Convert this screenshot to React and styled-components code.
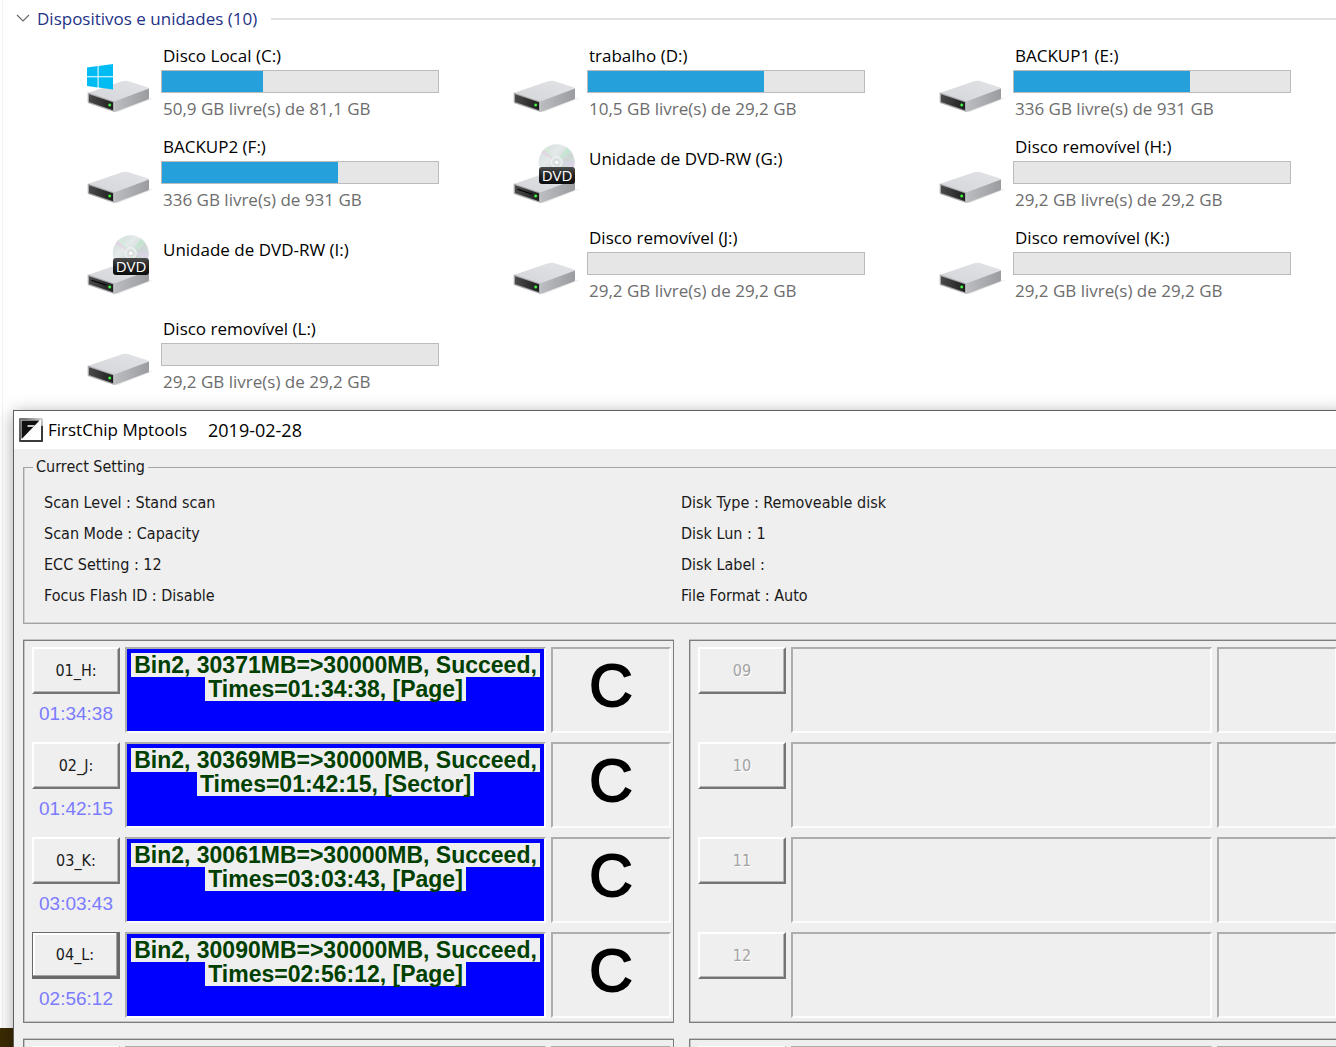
import styled, { createGlobalStyle, css } from 'styled-components';

const GlobalStyle = createGlobalStyle`
  * {
    box-sizing: border-box;
  }

  body {
    margin: 0;
  }

  button {
    font: inherit;
  }
`;

const segoe = '"Open Sans", "Noto Sans", sans-serif';
const tahoma = '"DejaVu Sans Condensed", "DejaVu Sans", sans-serif';
const arial = '"Liberation Sans", Arial, sans-serif';

const Desktop = styled.div`
  position: relative;
  height: 100vh;
  overflow: hidden;
  background: #3b2b04;
`;

/* ---------- Explorer ---------- */

const Explorer = styled.main`
  height: calc(100vh - 19px);
  margin-left: 2px;
  padding-top: 7px;
  border-left: 1px solid #f2f2f2;
  background: #fff;
  box-shadow: -2px 0 0 #fff;
  font-family: ${segoe};
  font-size: 17px;
  line-height: 24px;
  color: #000;
`;

const GroupHeader = styled.header`
  display: flex;
  align-items: center;
  padding-left: 13px;
`;

const GroupToggle = styled.button`
  display: flex;
  align-items: center;
  gap: 7px;
  padding: 0;
  border: 0;
  background: none;
  color: #1e3287;
`;

const GroupLine = styled.span`
  flex: 1;
  height: 2px;
  margin-left: 14px;
  background: #e2e2e2;
`;

const DriveGrid = styled.ul`
  display: grid;
  grid-template-columns: repeat(auto-fill, 352px);
  gap: 14px 74px;
  margin: 0;
  padding: 13px 0 0 84px;
  list-style: none;
`;

const DriveItem = styled.li`
  display: grid;
  grid-template-columns: 74px 1fr;
  height: 77px;
`;

const DriveInfo = styled.div`
  padding-top: ${({ $short }) => ($short ? '12px' : '0')};
`;

const DriveName = styled.div`
  padding-left: 2px;
`;

const DriveSpace = styled.div`
  padding-left: 2px;
  color: #6d6d6d;
`;

const UsageBar = styled.div`
  height: 23px;
  margin: 2px 0 4px;
  border: 1px solid #bcbcbc;
  background: #e6e6e6;
`;

const UsageFill = styled.div`
  height: 100%;
  background: #26a0da;
`;

const drives = [
  { name: 'Disco Local (C:)', space: '50,9 GB livre(s) de 81,1 GB', used: 36.6, windows: true },
  { name: 'trabalho (D:)', space: '10,5 GB livre(s) de 29,2 GB', used: 63.8 },
  { name: 'BACKUP1 (E:)', space: '336 GB livre(s) de 931 GB', used: 63.8 },
  { name: 'BACKUP2 (F:)', space: '336 GB livre(s) de 931 GB', used: 63.8 },
  { name: 'Unidade de DVD-RW (G:)', dvd: true },
  { name: 'Disco removível (H:)', space: '29,2 GB livre(s) de 29,2 GB', used: 0 },
  { name: 'Unidade de DVD-RW (I:)', dvd: true },
  { name: 'Disco removível (J:)', space: '29,2 GB livre(s) de 29,2 GB', used: 0 },
  { name: 'Disco removível (K:)', space: '29,2 GB livre(s) de 29,2 GB', used: 0 },
  { name: 'Disco removível (L:)', space: '29,2 GB livre(s) de 29,2 GB', used: 0 },
];

const DriveIcon = ({ windows, dvd }) => (
  <svg width="68" height="77" viewBox="0 0 68 77" aria-hidden="true">
    <defs>
      <linearGradient id="driveSide" x1="0" y1="0" x2="1" y2="0">
        <stop offset="0" stopColor="#bcbdc0" />
        <stop offset="1" stopColor="#9b9ca0" />
      </linearGradient>
      <linearGradient id="driveTop" x1="0" y1="1" x2="1" y2="0">
        <stop offset="0" stopColor="#d4d5d8" />
        <stop offset="1" stopColor="#e2e3e6" />
      </linearGradient>
      <linearGradient id="driveFront" x1="0" y1="0" x2="1" y2="0">
        <stop offset="0" stopColor="#4a4a4a" />
        <stop offset="1" stopColor="#1f1f1f" />
      </linearGradient>
      <linearGradient id="disc" x1="0" y1="0" x2="1" y2="1">
        <stop offset="0" stopColor="#cfd8d8" />
        <stop offset="0.35" stopColor="#e4eaea" />
        <stop offset="0.6" stopColor="#cdd6d4" />
        <stop offset="1" stopColor="#e3e3ea" />
      </linearGradient>
      <linearGradient id="dvdLabel" x1="0" y1="0" x2="0" y2="1">
        <stop offset="0" stopColor="#4c4c4c" />
        <stop offset="0.5" stopColor="#222" />
        <stop offset="1" stopColor="#0c0c0c" />
      </linearGradient>
    </defs>
    <path d="M27 68 62 54.5 67 54 31 68Z" fill="#e9e9e9" />
    <path d="M0.7 49 35 37.3Q38 36.4 41 37.1L60.5 43.2Q62.2 44 62 45L27.3 58.6Z" fill="url(#driveTop)" />
    <path d="M27.3 57.6 62 44.6V54Q62 55 60.8 55.5L29 67.6Q28 68 27.3 67.9Z" fill="url(#driveSide)" />
    <path d="M0.7 48.6 27.3 57.4V68L1.6 59.2Q0.7 58.8 0.7 58Z" fill="#a9aaad" />
    <path d="M2 50.2 26 58.2V66.2L2 58Z" fill="url(#driveFront)" />
    {dvd && <path d="M4.5 54.2 19.5 59.2" stroke="#000" strokeWidth="1.2" />}
    <circle cx="22.7" cy="61" r="1.7" fill="#1f7d1f" />
    <circle cx="22.7" cy="61" r="1.2" fill="#4dff4d" />
    {windows && (
      <g fill="#00bcf2">
        <path d="M0 23.6 10.6 22.1V32.2H0Z" />
        <path d="M11.6 22 26 20V32.2H11.6Z" />
        <path d="M0 33.2H10.6V43.4L0 42Z" />
        <path d="M11.6 33.2H26V45.5L11.6 43.6Z" />
      </g>
    )}
    {dvd && (
      <g>
        <circle cx="43.7" cy="27.3" r="18" fill="url(#disc)" />
        <path d="M43.7 27.3 28.4 17.8Q29.5 15.6 31 14.6Z" fill="#e6cfe4" opacity="0.7" />
        <path d="M43.7 27.3 31 14.6 34 12.2Z" fill="#d3ebd9" />
        <path d="M43.7 27.3 54 12.6 58.2 16.8Z" fill="#bfe6cd" opacity="0.8" />
        <path d="M43.7 27.3 61.4 26V32H58Z" fill="#dcd3ea" opacity="0.7" />
        <circle cx="43.7" cy="27.3" r="5.6" fill="#dfe4e4" stroke="#f6f8f8" />
        <circle cx="43.7" cy="27.3" r="2.4" fill="#fff" stroke="#c3caca" strokeWidth="0.8" />
        <rect x="26" y="32" width="36" height="17" rx="3" fill="url(#dvdLabel)" />
        <text x="44" y="46" fill="#fff" fontSize="15" textAnchor="middle">
          DVD
        </text>
      </g>
    )}
  </svg>
);

const Drive = ({ drive }) => (
  <DriveItem>
    <DriveIcon windows={drive.windows} dvd={drive.dvd} />
    <DriveInfo $short={drive.dvd}>
      <DriveName>{drive.name}</DriveName>
      {!drive.dvd && (
        <>
          <UsageBar>
            <UsageFill style={{ width: `${drive.used}%` }} />
          </UsageBar>
          <DriveSpace>{drive.space}</DriveSpace>
        </>
      )}
    </DriveInfo>
  </DriveItem>
);

/* ---------- Mptools window ---------- */

/* Hangs over the right edge of the desktop */
const ToolWindow = styled.section`
  position: absolute;
  top: 410px;
  left: 13px;
  right: -14px;
  border: 1px solid #5f5f5f;
  background: #efefef;
  box-shadow: 0 3px 16px rgba(0, 0, 0, 0.35);
  font-family: ${tahoma};
  font-size: 16px;
  line-height: 24px;
  color: #1a1a1a;
`;

const TitleBar = styled.header`
  display: flex;
  align-items: center;
  height: 38px;
  padding-left: 5px;
  background: #fff;
  font-family: ${segoe};
  color: #000;
`;

const AppName = styled.span`
  margin-left: 5px;
  font-size: 17px;
`;

const AppDate = styled.span`
  margin-left: 21px;
  font-size: 18px;
`;

const WindowBody = styled.div`
  display: grid;
  gap: 16px;
  padding: 6px 9px 9px;
`;

const Settings = styled.fieldset`
  display: grid;
  grid-template-columns: repeat(2, 1fr);
  gap: 7px 0;
  min-width: 0;
  margin: 0;
  padding: 12px 21px 15px 20px;
  border: 1px solid #a3a3a3;
  box-shadow: inset 0 -1px 0 #cfcfcf, inset 1px 0 0 #cfcfcf;
`;

const Legend = styled.legend`
  margin-left: -11px;
  padding: 0 3px;
`;

const Panels = styled.div`
  display: grid;
  grid-template-columns: repeat(2, minmax(0, 1fr));
  gap: 16px 15px;
`;

const Panel = styled.div`
  display: grid;
  align-content: start;
  gap: 9px;
  padding: 6px 2px 4px 8px;
  border: 1px solid #7d7d7d;
  box-shadow: 0 -1px 0 #c4c4c4, inset 1px 0 0 #c4c4c4, inset 0 -1px 0 #c4c4c4;
`;

const Slot = styled.div`
  display: grid;
  grid-template-columns: 88px 1fr 120px;
  gap: 5px;
  height: 86px;
`;

const SlotButton = styled.button`
  display: block;
  width: 100%;
  height: 47px;
  padding: 0;
  border: 2px solid;
  border-color: #fff #747474 #747474 #fff;
  background: #efefef;
  box-shadow: inset -1px -1px 0 #b4b4b4;
  color: #1a1a1a;

  &:disabled {
    color: #a3a3a3;
    text-shadow: 1px 1px 0 #fff;
  }

  ${({ $focused }) =>
    $focused &&
    css`
      border-color: #6a6a6a;
      border-width: 1px 3px 3px 1px;
      box-shadow: inset -1px -1px 0 #a3a3a3, inset 2px 2px 0 #fff;
    `}
`;

const Elapsed = styled.div`
  margin-top: 8px;
  font-family: ${arial};
  font-size: 19px;
  text-align: center;
  color: #7b7bff;
`;

const Well = styled.div`
  border: 2px solid;
  border-color: #adadad #fcfcfc #fcfcfc #adadad;
`;

const Status = styled(Well)`
  padding-top: 4px;
  font-family: ${arial};
  font-size: 23px;
  font-weight: 700;
  color: #004000;
  background: ${({ $done }) => ($done ? '#0000ff' : 'transparent')};
  background-clip: padding-box;
`;

const StatusLine = styled.div`
  width: fit-content;
  margin: 0 auto;
  padding: 0 3px;
  white-space: nowrap;
  background: #efefef;
`;

const Grade = styled(Well)`
  display: flex;
  align-items: center;
  justify-content: center;
  padding-bottom: 8px;
  font-family: ${arial};
  font-size: 60px;
  -webkit-text-stroke: 2px #000;
  color: #000;
`;

const settings = [
  'Scan Level : Stand scan',
  'Disk Type : Removeable disk',
  'Scan Mode : Capacity',
  'Disk Lun : 1',
  'ECC Setting : 12',
  'Disk Label :',
  'Focus Flash ID : Disable',
  'File Format : Auto',
];

const panels = [
  [
    { id: '01', label: '01_H:', time: '01:34:38', size: 30371, mode: 'Page' },
    { id: '02', label: '02_J:', time: '01:42:15', size: 30369, mode: 'Sector' },
    { id: '03', label: '03_K:', time: '03:03:43', size: 30061, mode: 'Page' },
    { id: '04', label: '04_L:', time: '02:56:12', size: 30090, mode: 'Page', focused: true },
  ],
  [
    { id: '09', label: '09' },
    { id: '10', label: '10' },
    { id: '11', label: '11' },
    { id: '12', label: '12' },
  ],
  [{ id: '05' }],
  [{ id: '13' }],
];

const AppIcon = () => (
  <svg width="24" height="24" viewBox="0 0 24 24" aria-hidden="true">
    <defs>
      <linearGradient id="appFrame" x1="0" y1="1" x2="1" y2="0">
        <stop offset="0" stopColor="#555" />
        <stop offset="0.6" stopColor="#777" />
        <stop offset="1" stopColor="#ddd" />
      </linearGradient>
    </defs>
    <rect width="24" height="24" rx="1" fill="url(#appFrame)" />
    <path d="M24 8V23Q24 24 23 24H1V22H22V8Z" fill="#3a3a3a" />
    <rect x="2" y="2" width="20" height="20" fill="#fff" />
    <path d="M2.5 2.5H20.5L3.2 20.5H2.5Z" fill="#111" />
    <path d="M8.5 7H16L14.2 9H8.5Z" fill="#c8c8c8" />
  </svg>
);

const SlotRow = ({ slot }) => (
  <Slot>
    <div>
      <SlotButton
        type="button"
        aria-label={`Slot ${slot.id}`}
        disabled={!slot.time}
        $focused={slot.focused}
      >
        {slot.label}
      </SlotButton>
      {slot.time && <Elapsed>{slot.time}</Elapsed>}
    </div>
    <Status $done={!!slot.time}>
      {slot.time && (
        <>
          <StatusLine>{`Bin2, ${slot.size}MB=>30000MB, Succeed,`}</StatusLine>
          <StatusLine>{`Times=${slot.time}, [${slot.mode}]`}</StatusLine>
        </>
      )}
    </Status>
    <Grade>{slot.time && 'C'}</Grade>
  </Slot>
);

const App = () => (
  <>
    <GlobalStyle />
    <Desktop>
      <Explorer>
        <GroupHeader>
          <GroupToggle type="button" aria-expanded="true">
            <svg width="14" height="14" viewBox="0 0 14 14" fill="none" aria-hidden="true">
              <path d="M1 3 7 9 13 3" stroke="#6a6a6a" strokeWidth="1.2" />
            </svg>
            Dispositivos e unidades (10)
          </GroupToggle>
          <GroupLine />
        </GroupHeader>
        <DriveGrid>
          {drives.map((drive) => (
            <Drive key={drive.name} drive={drive} />
          ))}
        </DriveGrid>
      </Explorer>

      <ToolWindow>
        <TitleBar>
          <AppIcon />
          <AppName>FirstChip Mptools</AppName>
          <AppDate>2019-02-28</AppDate>
        </TitleBar>
        <WindowBody>
          <Settings>
            <Legend>Currect Setting</Legend>
            {settings.map((line) => (
              <div key={line}>{line}</div>
            ))}
          </Settings>
          <Panels>
            {panels.map((slots) => (
              <Panel key={slots[0].id}>
                {slots.map((slot) => (
                  <SlotRow key={slot.id} slot={slot} />
                ))}
              </Panel>
            ))}
          </Panels>
        </WindowBody>
      </ToolWindow>
    </Desktop>
  </>
);

export default App;
